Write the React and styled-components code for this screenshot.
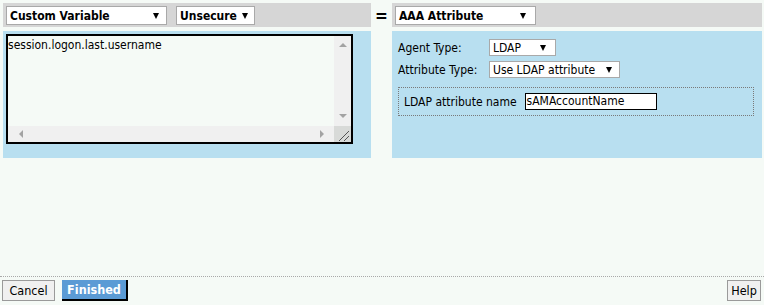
import React from "react";
import styled, { createGlobalStyle } from "styled-components";

const Global = createGlobalStyle`
  html, body { margin: 0; padding: 0; }
  body {
    background: #f5faf6;
    font-family: "DejaVu Sans Condensed", "DejaVu Sans", sans-serif;
    font-stretch: condensed;
    font-size: 12px;
    color: #000;
  }
`;

const Page = styled.div`
  box-sizing: border-box;
  height: 305px;
  display: flex;
  flex-direction: column;
`;

const Top = styled.div`
  display: flex;
  align-items: flex-start;
  padding: 3px 0 0 3px;
`;

const Column = styled.div`
  width: ${(p) => p.$w}px;
  display: flex;
  flex-direction: column;
  gap: 4px;
`;

const Header = styled.div`
  height: 24px;
  background: #d6d6d6;
  box-sizing: border-box;
  padding: 3px 3px 0;
  display: flex;
  gap: 9px;
`;

const Panel = styled.div`
  height: 127px;
  background: #b8dff0;
  box-sizing: border-box;
  padding: ${(p) => p.$pad};
`;

const Equals = styled.div`
  width: 21px;
  text-align: center;
  font-family: "DejaVu Sans", sans-serif;
  font-weight: bold;
  font-size: 17px;
  line-height: 26px;
`;

const SelectBox = styled.div`
  box-sizing: border-box;
  width: ${(p) => p.$w}px;
  height: ${(p) => p.$h || 19}px;
  border: 1px solid #a9a9a9;
  background: #fff;
  display: flex;
  align-items: center;
  justify-content: space-between;
  padding: 0 ${(p) => p.$pr || 7}px 0 3px;
  font-weight: ${(p) => (p.$bold ? "bold" : "normal")};
  white-space: nowrap;
`;

const Arrow = styled.span`
  width: 0;
  height: 0;
  border-left: 3.5px solid transparent;
  border-right: 3.5px solid transparent;
  border-top: 6px solid #000;
`;

const Select = ({ w, h, bold, pr, children }) => (
  <SelectBox $w={w} $h={h} $bold={bold} $pr={pr}>
    <span>{children}</span>
    <Arrow />
  </SelectBox>
);

const TextArea = styled.div`
  box-sizing: border-box;
  width: 347px;
  height: 110px;
  border: 2px solid #000;
  display: grid;
  grid-template-columns: 1fr 17px;
  grid-template-rows: 1fr 16px;
  background: #f5faf6;
`;

const TAText = styled.div`
  padding: 2px 0 0 0;
  line-height: 15px;
`;

const VScroll = styled.div`
  background: #f0f0f0;
  display: flex;
  flex-direction: column;
  justify-content: space-between;
  align-items: center;
  padding: 7px 0 8px;
`;

const HScroll = styled.div`
  background: #f0f0f0;
  display: flex;
  justify-content: space-between;
  align-items: center;
  padding: 0 10px 0 11px;
`;

const Corner = styled.div`
  background: #d8dad8;
`;

const Tri = styled.span`
  width: 0;
  height: 0;
  ${(p) =>
    p.$dir === "up"
      ? "border-left:4px solid transparent;border-right:4px solid transparent;border-bottom:4px solid #a3a3a3;"
      : p.$dir === "down"
      ? "border-left:4px solid transparent;border-right:4px solid transparent;border-top:4px solid #a3a3a3;"
      : p.$dir === "left"
      ? "border-top:4px solid transparent;border-bottom:4px solid transparent;border-right:4px solid #a3a3a3;"
      : "border-top:4px solid transparent;border-bottom:4px solid transparent;border-left:4px solid #a3a3a3;"}
`;

const FieldRow = styled.div`
  display: flex;
  align-items: center;
  height: 17px;
  margin-bottom: 5px;
`;

const Label = styled.span`
  width: 91px;
`;

const AttrBox = styled.div`
  margin-top: 9px;
  box-sizing: border-box;
  width: 356px;
  height: 29px;
  border: 1px dotted #7a7a7a;
  display: flex;
  align-items: center;
  padding-left: 5px;
  gap: 8px;
`;

const TextInput = styled.div`
  box-sizing: border-box;
  width: 132px;
  height: 17px;
  border: 1px solid #000;
  background: #fff;
  padding-left: 1px;
  line-height: 15px;
`;

const Footer = styled.div`
  margin-top: auto;
  border-top: 1px dotted #a9a9a9;
  display: flex;
  align-items: flex-start;
  height: 29px;
  box-sizing: border-box;
  padding: 3px 3px 0 2px;
  gap: 7px;
`;

const Button = styled.div`
  box-sizing: border-box;
  width: ${(p) => p.$w}px;
  height: 21px;
  display: flex;
  align-items: center;
  justify-content: center;
  font-size: 12.5px;
  ${(p) =>
    p.$primary
      ? `background:#5b9bd5;color:#fff;font-weight:bold;border-right:2px solid #000;border-bottom:2px solid #000;`
      : `background:#f0f0f0;color:#000;border:1px solid #9a9a9a;`}
  ${(p) => (p.$right ? "margin-left:auto;" : "")}
`;

export default function App() {
  return (
    <Page>
      <Global />
      <Top>
        <Column $w={368}>
          <Header>
            <Select w={161} bold>Custom Variable</Select>
            <Select w={79} bold pr={6}>Unsecure</Select>
          </Header>
          <Panel $pad="3px 0 0 3px">
            <TextArea>
              <TAText>session.logon.last.username</TAText>
              <VScroll>
                <Tri $dir="up" />
                <Tri $dir="down" />
              </VScroll>
              <HScroll>
                <Tri $dir="left" />
                <Tri $dir="right" />
              </HScroll>
              <Corner>
                <svg width="17" height="16" viewBox="0 0 17 16" style={{ display: "block" }}>
                  <line x1="15" y1="5" x2="5" y2="15" stroke="#555" strokeWidth="1" />
                  <line x1="15" y1="10" x2="10" y2="15" stroke="#555" strokeWidth="1" />
                </svg>
              </Corner>
            </TextArea>
          </Panel>
        </Column>
        <Equals>=</Equals>
        <Column $w={370}>
          <Header>
            <Select w={141} bold pr={9}>AAA Attribute</Select>
          </Header>
          <Panel $pad="8px 8px 0 6px">
            <FieldRow>
              <Label>Agent Type:</Label>
              <Select w={67} h={17} pr={9}>LDAP</Select>
            </FieldRow>
            <FieldRow>
              <Label>Attribute Type:</Label>
              <Select w={131} h={17} pr={7}>Use LDAP attribute</Select>
            </FieldRow>
            <AttrBox>
              <span>LDAP attribute name</span>
              <TextInput>sAMAccountName</TextInput>
            </AttrBox>
          </Panel>
        </Column>
      </Top>
      <Footer>
        <Button $w={53}>Cancel</Button>
        <Button $primary $w={66}>Finished</Button>
        <Button $right $w={34}>Help</Button>
      </Footer>
    </Page>
  );
}
